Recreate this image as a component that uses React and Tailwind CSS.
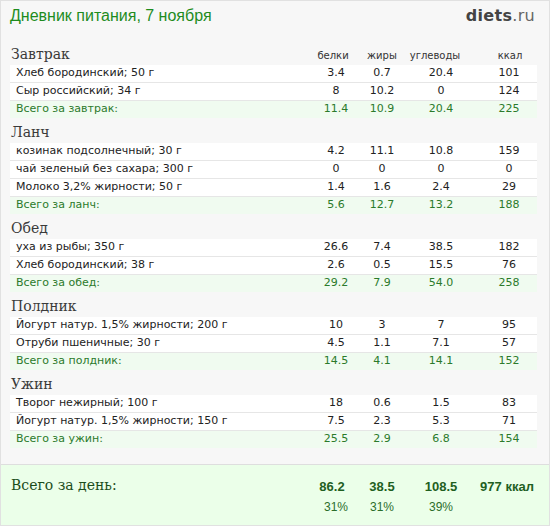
const meals = [
  {
    title: 'Завтрак',
    showHead: true,
    items: [
      ['Хлеб бородинский; 50 г', '3.4', '0.7', '20.4', '101'],
      ['Сыр российский; 34 г', '8', '10.2', '0', '124'],
    ],
    total: ['Всего за завтрак:', '11.4', '10.9', '20.4', '225'],
  },
  {
    title: 'Ланч',
    items: [
      ['козинак подсолнечный; 30 г', '4.2', '11.1', '10.8', '159'],
      ['чай зеленый без сахара; 300 г', '0', '0', '0', '0'],
      ['Молоко 3,2% жирности; 50 г', '1.4', '1.6', '2.4', '29'],
    ],
    total: ['Всего за ланч:', '5.6', '12.7', '13.2', '188'],
  },
  {
    title: 'Обед',
    items: [
      ['уха из рыбы; 350 г', '26.6', '7.4', '38.5', '182'],
      ['Хлеб бородинский; 38 г', '2.6', '0.5', '15.5', '76'],
    ],
    total: ['Всего за обед:', '29.2', '7.9', '54.0', '258'],
  },
  {
    title: 'Полдник',
    items: [
      ['Йогурт натур. 1,5% жирности; 200 г', '10', '3', '7', '95'],
      ['Отруби пшеничные; 30 г', '4.5', '1.1', '7.1', '57'],
    ],
    total: ['Всего за полдник:', '14.5', '4.1', '14.1', '152'],
  },
  {
    title: 'Ужин',
    items: [
      ['Творог нежирный; 100 г', '18', '0.6', '1.5', '83'],
      ['Йогурт натур. 1,5% жирности; 150 г', '7.5', '2.3', '5.3', '71'],
    ],
    total: ['Всего за ужин:', '25.5', '2.9', '6.8', '154'],
  },
];

const cols = 'grid grid-cols-[1fr_46px_46px_72px_60px]';
const verdana = "font-['DejaVu_Sans',Verdana,sans-serif]";
const serif = "font-['DejaVu_Serif',Georgia,serif]";
const arial = "font-['Liberation_Sans',Arial,sans-serif]";

const Row = ({ cells, total }) => (
  <div
    className={`${cols} items-center text-[11px] ${verdana} ${
      total ? 'h-[17px] bg-[#f0fbf0] text-[#2b7a2b]' : 'h-[18px] bg-white text-[#222] border-b border-[#e6e6e6]'
    }`}
  >
    <div className="pl-[6px] whitespace-nowrap">{cells[0]}</div>
    <div className="text-center">{cells[1]}</div>
    <div className="text-center">{cells[2]}</div>
    <div className="text-center">{cells[3]}</div>
    <div className="text-center pl-[4px]">{cells[4]}</div>
  </div>
);

const Meal = ({ meal }) => (
  <div>
    <div className={`${cols} h-[25px] items-end pb-[4px]`}>
      <div className={`${serif} text-[14px] leading-none text-[#3a3a3a] pl-[1px]`}>{meal.title}</div>
      {meal.showHead && (
        <>
          <div className={`${verdana} text-[10px] leading-none text-[#333] text-center -translate-x-[3px]`}>белки</div>
          <div className={`${verdana} text-[10px] leading-none text-[#333] text-center`}>жиры</div>
          <div className={`${verdana} text-[10px] leading-none text-[#333] text-center -translate-x-[6px]`}>углеводы</div>
          <div className={`${verdana} text-[10px] leading-none text-[#333] text-center pl-[6px]`}>ккал</div>
        </>
      )}
    </div>
    {meal.items.map((it, i) => (
      <Row key={i} cells={it} />
    ))}
    <Row cells={meal.total} total />
  </div>
);

export default function App() {
  return (
    <div className="w-[550px] h-[526px] bg-[#f7f7f7] border border-[#e1e1e1] flex flex-col">
      <div className="h-[39px] flex justify-between items-start pl-[9px] pr-[12px] pt-[5px]">
        <div className={`${arial} text-[16px] leading-[20px] text-[#1e8c1e]`}>
          Дневник питания, 7 ноября
        </div>
        <div className={`${verdana} text-[16px] leading-[20px] tracking-[0.3px] -translate-x-[2px]`}>
          <span className="font-bold text-[#444]">diets</span>
          <span className="text-[#666]">.ru</span>
        </div>
      </div>
      <div className="pl-[9px] pr-[12px] pb-[16px]">
        {meals.map((m) => (
          <Meal key={m.title} meal={m} />
        ))}
      </div>
      <div className="flex-1 border-t border-[#dedede] bg-[#ebffe9] pl-[10px] pr-[12px] pt-[10px]">
        <div className={`${cols} items-start`}>
          <div className={`${serif} text-[14px] leading-[20px] text-[#1b4d1b]`}>Всего за день:</div>
          <div className={`${arial} font-bold text-[13px] leading-[20px] text-[#1f5f1f] text-center -translate-x-[4px] pt-[2px]`}>86.2</div>
          <div className={`${arial} font-bold text-[13px] leading-[20px] text-[#1f5f1f] text-center pt-[2px]`}>38.5</div>
          <div className={`${arial} font-bold text-[13px] leading-[20px] text-[#1f5f1f] text-center pt-[2px]`}>108.5</div>
          <div className={`${arial} font-bold text-[13px] leading-[20px] text-[#1f5f1f] text-center pt-[2px] whitespace-nowrap`}>977 ккал</div>
          <div></div>
          <div className={`${arial} text-[12px] leading-[20px] text-[#2b6e2b] text-center`}>31%</div>
          <div className={`${arial} text-[12px] leading-[20px] text-[#2b6e2b] text-center`}>31%</div>
          <div className={`${arial} text-[12px] leading-[20px] text-[#2b6e2b] text-center`}>39%</div>
          <div></div>
        </div>
      </div>
    </div>
  );
}
